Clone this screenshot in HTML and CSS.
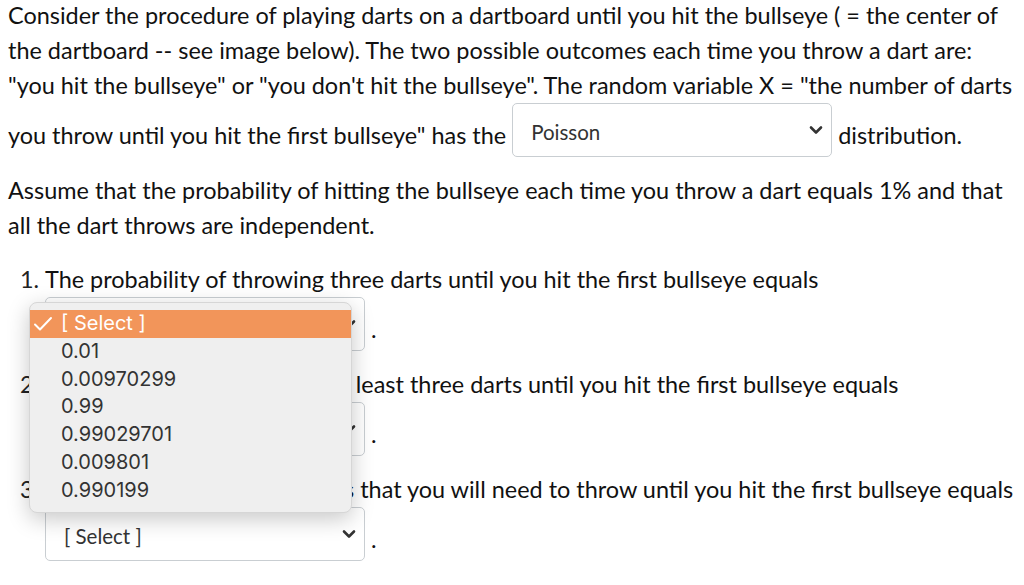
FILE: index.html
```html
<!DOCTYPE html>
<html>
<head>
<meta charset="utf-8">
<link rel="stylesheet" href="styles.css">
</head>
<body>
<div class="page">
  <p class="para first">Consider the procedure of playing darts on a dartboard until you hit the bullseye ( = the center of the dartboard -- see image below). The two possible outcomes each time you throw a dart are: "you hit the bullseye" or "you don't hit the bullseye". The random variable X = "the number of darts you throw until you hit the first bullseye" has the <span class="sel wide"><span class="sel-text">Poisson</span><svg class="chev" width="14" height="10" viewBox="0 0 14 10"><path d="M2 2.5 L7 7.5 L12 2.5" fill="none" stroke="#333" stroke-width="2.6" stroke-linecap="round" stroke-linejoin="round"/></svg></span> distribution.</p>
  <p class="para">Assume that the probability of hitting the bullseye each time you throw a dart equals 1% and that all the dart throws are independent.</p>
  <ol class="qs">
    <li class="q">The probability of throwing three darts until you hit the first bullseye equals <span class="sel"><span class="sel-text">[ Select ]</span><svg class="chev" width="14" height="10" viewBox="0 0 14 10"><path d="M2 2.5 L7 7.5 L12 2.5" fill="none" stroke="#333" stroke-width="2.6" stroke-linecap="round" stroke-linejoin="round"/></svg></span> .</li>
    <li class="q">The probability of throwing at least three darts until you hit the first bullseye equals <span class="sel"><span class="sel-text">[ Select ]</span><svg class="chev" width="14" height="10" viewBox="0 0 14 10"><path d="M2 2.5 L7 7.5 L12 2.5" fill="none" stroke="#333" stroke-width="2.6" stroke-linecap="round" stroke-linejoin="round"/></svg></span> .</li>
    <li class="q">The expected number of darts that you will need to throw until you hit the first bullseye equals <span class="sel"><span class="sel-text">[ Select ]</span><svg class="chev" width="14" height="10" viewBox="0 0 14 10"><path d="M2 2.5 L7 7.5 L12 2.5" fill="none" stroke="#333" stroke-width="2.6" stroke-linecap="round" stroke-linejoin="round"/></svg></span> .</li>
  </ol>
  <div class="menu">
    <div class="opt active"><svg class="tick" width="20" height="16" viewBox="0 0 20 16"><path d="M2 8.5 L7 13.5 L18 2" fill="none" stroke="#fff" stroke-width="2" stroke-linecap="round" stroke-linejoin="round"/></svg>[ Select ]</div>
    <div class="opt">0.01</div>
    <div class="opt">0.00970299</div>
    <div class="opt">0.99</div>
    <div class="opt">0.99029701</div>
    <div class="opt">0.009801</div>
    <div class="opt">0.990199</div>
  </div>
</div>
</body>
</html>
```
FILE: styles.css
```css
html, body {
  margin: 0;
  padding: 0;
  background: #ffffff;
}
.page {
  position: relative;
  padding: 0 8px;
  font-family: Lato, "Open Sans", sans-serif;
  font-size: 23.45px;
  line-height: 35px;
  color: #111;
}
.para {
  margin: 0 0 16px 0;
}
.para.first {
  margin-top: -2px;
}
.sel {
  display: inline-flex;
  align-items: center;
  justify-content: space-between;
  box-sizing: border-box;
  width: 320px;
  height: 54px;
  padding: 4px 8px 0 18px;
  border: 1px solid #c9ced2;
  border-radius: 5px;
  background: #fff;
  font-size: 20.5px;
  color: #333;
  line-height: 1;
  vertical-align: 4px;
}
.chev {
  display: block;
  margin-top: -4px;
}
.qs {
  margin: 19px 0 0 0;
  padding-left: 37px;
}
.q {
  margin: 0 0 16px 0;
}
.q::marker {
  color: #222;
}
.menu {
  position: absolute;
  left: 29px;
  top: 304px;
  width: 323px;
  box-sizing: border-box;
  padding: 7px 0 7px 0;
  background: #efefef;
  border: 1px solid #d6d6d6;
  border-radius: 8px;
  box-shadow: 0 6px 22px rgba(0, 0, 0, 0.22);
  font-family: Inter, "Liberation Sans", sans-serif;
  font-size: 20px;
  color: #333;
}
.opt {
  position: relative;
  height: 27.8px;
  line-height: 27.8px;
  padding-left: 31px;
}
.opt.active {
  background: #f2955a;
  color: #fff;
}
.tick {
  position: absolute;
  left: 3px;
  top: 6px;
}
```
